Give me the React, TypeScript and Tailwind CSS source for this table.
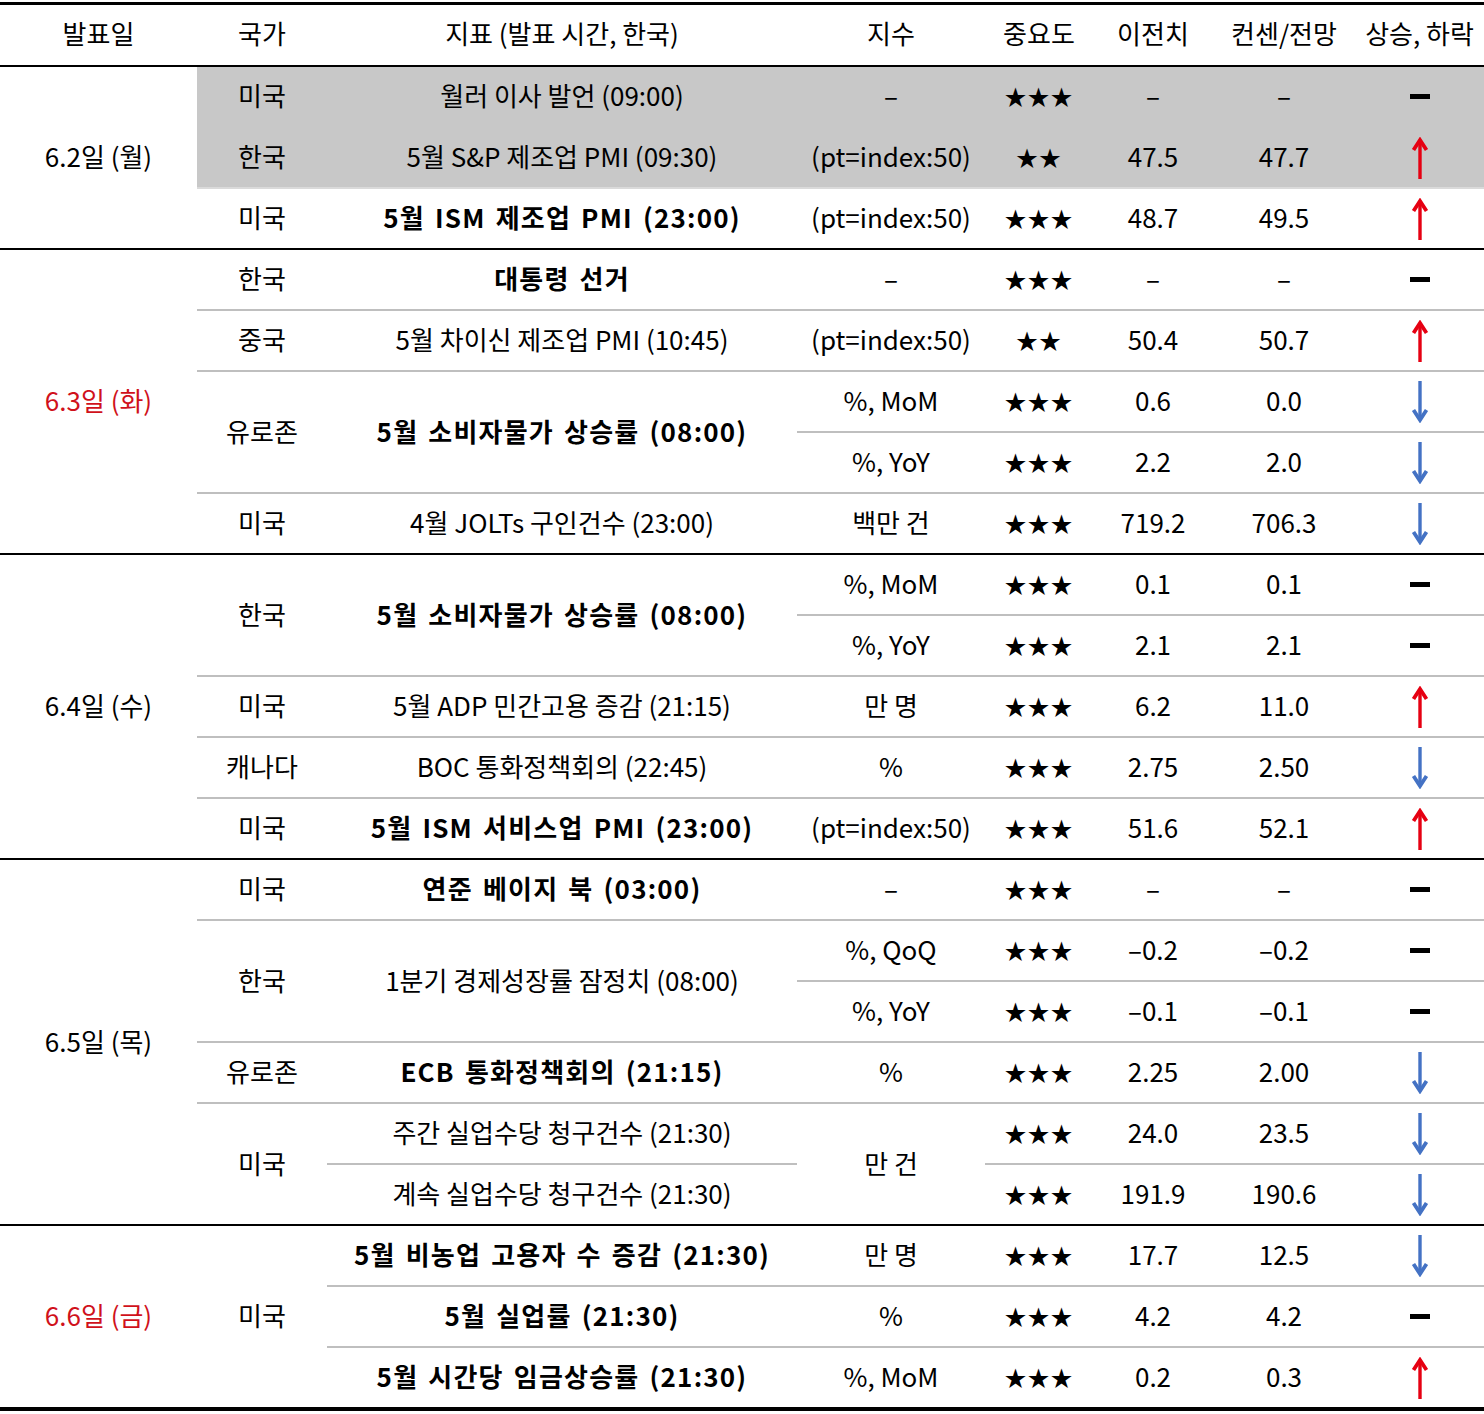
import React from "react";

type Dir = "up" | "down" | "flat";
type ValRow = { unit: string; stars: number; prev: string; cons: string; dir: Dir };
type Ind = { name: string; bold?: boolean; rows: ValRow[] };
type MergedItem = { name: string; stars: number; prev: string; cons: string; dir: Dir };
type Country = {
  name: string;
  shaded?: boolean;
  inds?: Ind[];
  merged?: { unit: string; items: MergedItem[] };
};
type Section = { date: string; red?: boolean; countries: Country[] };

const D = "–";

const data: Section[] = [
  {
    date: "6.2일 (월)",
    countries: [
      { name: "미국", shaded: true, inds: [{ name: "월러 이사 발언 (09:00)", rows: [{ unit: D, stars: 3, prev: D, cons: D, dir: "flat" }] }] },
      { name: "한국", shaded: true, inds: [{ name: "5월 S&P 제조업 PMI (09:30)", rows: [{ unit: "(pt=index:50)", stars: 2, prev: "47.5", cons: "47.7", dir: "up" }] }] },
      { name: "미국", inds: [{ name: "5월 ISM 제조업 PMI (23:00)", bold: true, rows: [{ unit: "(pt=index:50)", stars: 3, prev: "48.7", cons: "49.5", dir: "up" }] }] },
    ],
  },
  {
    date: "6.3일 (화)",
    red: true,
    countries: [
      { name: "한국", inds: [{ name: "대통령 선거", bold: true, rows: [{ unit: D, stars: 3, prev: D, cons: D, dir: "flat" }] }] },
      { name: "중국", inds: [{ name: "5월 차이신 제조업 PMI (10:45)", rows: [{ unit: "(pt=index:50)", stars: 2, prev: "50.4", cons: "50.7", dir: "up" }] }] },
      {
        name: "유로존",
        inds: [
          {
            name: "5월 소비자물가 상승률 (08:00)",
            bold: true,
            rows: [
              { unit: "%, MoM", stars: 3, prev: "0.6", cons: "0.0", dir: "down" },
              { unit: "%, YoY", stars: 3, prev: "2.2", cons: "2.0", dir: "down" },
            ],
          },
        ],
      },
      { name: "미국", inds: [{ name: "4월 JOLTs 구인건수 (23:00)", rows: [{ unit: "백만 건", stars: 3, prev: "719.2", cons: "706.3", dir: "down" }] }] },
    ],
  },
  {
    date: "6.4일 (수)",
    countries: [
      {
        name: "한국",
        inds: [
          {
            name: "5월 소비자물가 상승률 (08:00)",
            bold: true,
            rows: [
              { unit: "%, MoM", stars: 3, prev: "0.1", cons: "0.1", dir: "flat" },
              { unit: "%, YoY", stars: 3, prev: "2.1", cons: "2.1", dir: "flat" },
            ],
          },
        ],
      },
      { name: "미국", inds: [{ name: "5월 ADP 민간고용 증감 (21:15)", rows: [{ unit: "만 명", stars: 3, prev: "6.2", cons: "11.0", dir: "up" }] }] },
      { name: "캐나다", inds: [{ name: "BOC 통화정책회의 (22:45)", rows: [{ unit: "%", stars: 3, prev: "2.75", cons: "2.50", dir: "down" }] }] },
      { name: "미국", inds: [{ name: "5월 ISM 서비스업 PMI (23:00)", bold: true, rows: [{ unit: "(pt=index:50)", stars: 3, prev: "51.6", cons: "52.1", dir: "up" }] }] },
    ],
  },
  {
    date: "6.5일 (목)",
    countries: [
      { name: "미국", inds: [{ name: "연준 베이지 북 (03:00)", bold: true, rows: [{ unit: D, stars: 3, prev: D, cons: D, dir: "flat" }] }] },
      {
        name: "한국",
        inds: [
          {
            name: "1분기 경제성장률 잠정치 (08:00)",
            rows: [
              { unit: "%, QoQ", stars: 3, prev: "–0.2", cons: "–0.2", dir: "flat" },
              { unit: "%, YoY", stars: 3, prev: "–0.1", cons: "–0.1", dir: "flat" },
            ],
          },
        ],
      },
      { name: "유로존", inds: [{ name: "ECB 통화정책회의 (21:15)", bold: true, rows: [{ unit: "%", stars: 3, prev: "2.25", cons: "2.00", dir: "down" }] }] },
      {
        name: "미국",
        merged: {
          unit: "만 건",
          items: [
            { name: "주간 실업수당 청구건수 (21:30)", stars: 3, prev: "24.0", cons: "23.5", dir: "down" },
            { name: "계속 실업수당 청구건수 (21:30)", stars: 3, prev: "191.9", cons: "190.6", dir: "down" },
          ],
        },
      },
    ],
  },
  {
    date: "6.6일 (금)",
    red: true,
    countries: [
      {
        name: "미국",
        inds: [
          { name: "5월 비농업 고용자 수 증감 (21:30)", bold: true, rows: [{ unit: "만 명", stars: 3, prev: "17.7", cons: "12.5", dir: "down" }] },
          { name: "5월 실업률 (21:30)", bold: true, rows: [{ unit: "%", stars: 3, prev: "4.2", cons: "4.2", dir: "flat" }] },
          { name: "5월 시간당 임금상승률 (21:30)", bold: true, rows: [{ unit: "%, MoM", stars: 3, prev: "0.2", cons: "0.3", dir: "up" }] },
        ],
      },
    ],
  },
];

function Arrow({ dir }: { dir: Dir }) {
  if (dir === "flat") {
    return <div className="h-[5px] w-[20px] bg-black" />;
  }
  if (dir === "up") {
    return (
      <svg width="18" height="42" viewBox="0 0 18 42">
        <line x1="9" y1="5" x2="9" y2="42" stroke="#e60012" strokeWidth="3.4" />
        <polyline points="2.5,13 9,3 15.5,13" fill="none" stroke="#e60012" strokeWidth="3.8" strokeLinejoin="miter" />
      </svg>
    );
  }
  return (
    <svg width="18" height="42" viewBox="0 0 18 42">
      <line x1="9" y1="0" x2="9" y2="36" stroke="#4472c4" strokeWidth="3.4" />
      <polyline points="2.5,29 9,39 15.5,29" fill="none" stroke="#4472c4" strokeWidth="3.8" strokeLinejoin="miter" />
    </svg>
  );
}

function Stars({ n }: { n: number }) {
  return <span className="pb-[4px] text-[22px] tracking-[1px]">{n === 3 ? "★★★" : "★★"}</span>;
}

function T({ children, bold }: { children: React.ReactNode; bold?: boolean }) {
  return (
    <span className={bold ? "pb-[3px] font-bold tracking-[1.2px] [word-spacing:3px]" : "pb-[3px]"}>{children}</span>
  );
}

const cell = "flex items-center justify-center";

function ValueCells({ r }: { r: { stars: number; prev: string; cons: string; dir: Dir } }) {
  return (
    <>
      <div className={`${cell} w-[108px]`}>
        <Stars n={r.stars} />
      </div>
      <div className={`${cell} w-[120px]`}>
        <T>{r.prev}</T>
      </div>
      <div className={`${cell} w-[142px]`}>
        <T>{r.cons}</T>
      </div>
      <div className={`${cell} w-[129px]`}>
        <Arrow dir={r.dir} />
      </div>
    </>
  );
}

function CountryBlock({ c, first, prevShaded }: { c: Country; first: boolean; prevShaded: boolean }) {
  let border = "";
  if (!first) {
    if (c.shaded && prevShaded) border = "border-t-2 border-[#c8c8c8]";
    else if (prevShaded) border = "border-t-2 border-[#dadada]";
    else border = "border-t-2 border-[#bfbfbf]";
  }
  const bg = c.shaded ? "bg-[#c8c8c8]" : "";
  return (
    <div className={`flex ${border} ${bg}`}>
      <div className={`${cell} w-[130px]`}>
        <T>{c.name}</T>
      </div>
      {c.inds && (
        <div className="flex flex-1 flex-col">
          {c.inds.map((ind, i) => (
            <div key={i} className={`flex ${i > 0 ? "border-t-2 border-[#bfbfbf]" : ""}`}>
              <div className={`${cell} w-[470px]`}>
                <T bold={ind.bold}>{ind.name}</T>
              </div>
              <div className="flex flex-1 flex-col">
                {ind.rows.map((r, j) => (
                  <div key={j} className={`box-content flex h-[59px] ${j > 0 ? "border-t-2 border-[#bfbfbf]" : ""}`}>
                    <div className={`${cell} w-[188px]`}>
                      <T>{r.unit}</T>
                    </div>
                    <ValueCells r={r} />
                  </div>
                ))}
              </div>
            </div>
          ))}
        </div>
      )}
      {c.merged && (
        <div className="flex flex-1">
          <div className="flex w-[470px] flex-col">
            {c.merged.items.map((it, i) => (
              <div key={i} className={`box-content flex h-[59px] items-center justify-center ${i > 0 ? "border-t-2 border-[#bfbfbf]" : ""}`}>
                <T>{it.name}</T>
              </div>
            ))}
          </div>
          <div className={`${cell} w-[188px]`}>
            <T>{c.merged.unit}</T>
          </div>
          <div className="flex flex-1 flex-col">
            {c.merged.items.map((it, i) => (
              <div key={i} className={`box-content flex h-[59px] ${i > 0 ? "border-t-2 border-[#bfbfbf]" : ""}`}>
                <ValueCells r={it} />
              </div>
            ))}
          </div>
        </div>
      )}
    </div>
  );
}

export default function App() {
  return (
    <div className="w-[1484px] bg-white pt-[2px] font-['Noto_Sans_CJK_KR',sans-serif] text-[26px] leading-none text-black">
      <div className="flex h-[63px] items-center border-t-[3px] border-black pb-[4px]">
        <div className="flex w-[197px] justify-center">발표일</div>
        <div className="flex w-[130px] justify-center">국가</div>
        <div className="flex w-[470px] justify-center">지표 (발표 시간, 한국)</div>
        <div className="flex w-[188px] justify-center">지수</div>
        <div className="flex w-[108px] justify-center">중요도</div>
        <div className="flex w-[120px] justify-center">이전치</div>
        <div className="flex w-[142px] justify-center">컨센/전망</div>
        <div className="flex w-[129px] justify-center">상승, 하락</div>
      </div>
      {data.map((s, si) => (
        <div key={si} className="flex border-t-2 border-black">
          <div className={`${cell} w-[197px] ${s.red ? "text-[#d0111b]" : ""}`}>
            <T>{s.date}</T>
          </div>
          <div className="flex flex-1 flex-col">
            {s.countries.map((c, ci) => (
              <CountryBlock key={ci} c={c} first={ci === 0} prevShaded={ci > 0 && !!s.countries[ci - 1].shaded} />
            ))}
          </div>
        </div>
      ))}
      <div className="h-[4px] bg-black" />
    </div>
  );
}
